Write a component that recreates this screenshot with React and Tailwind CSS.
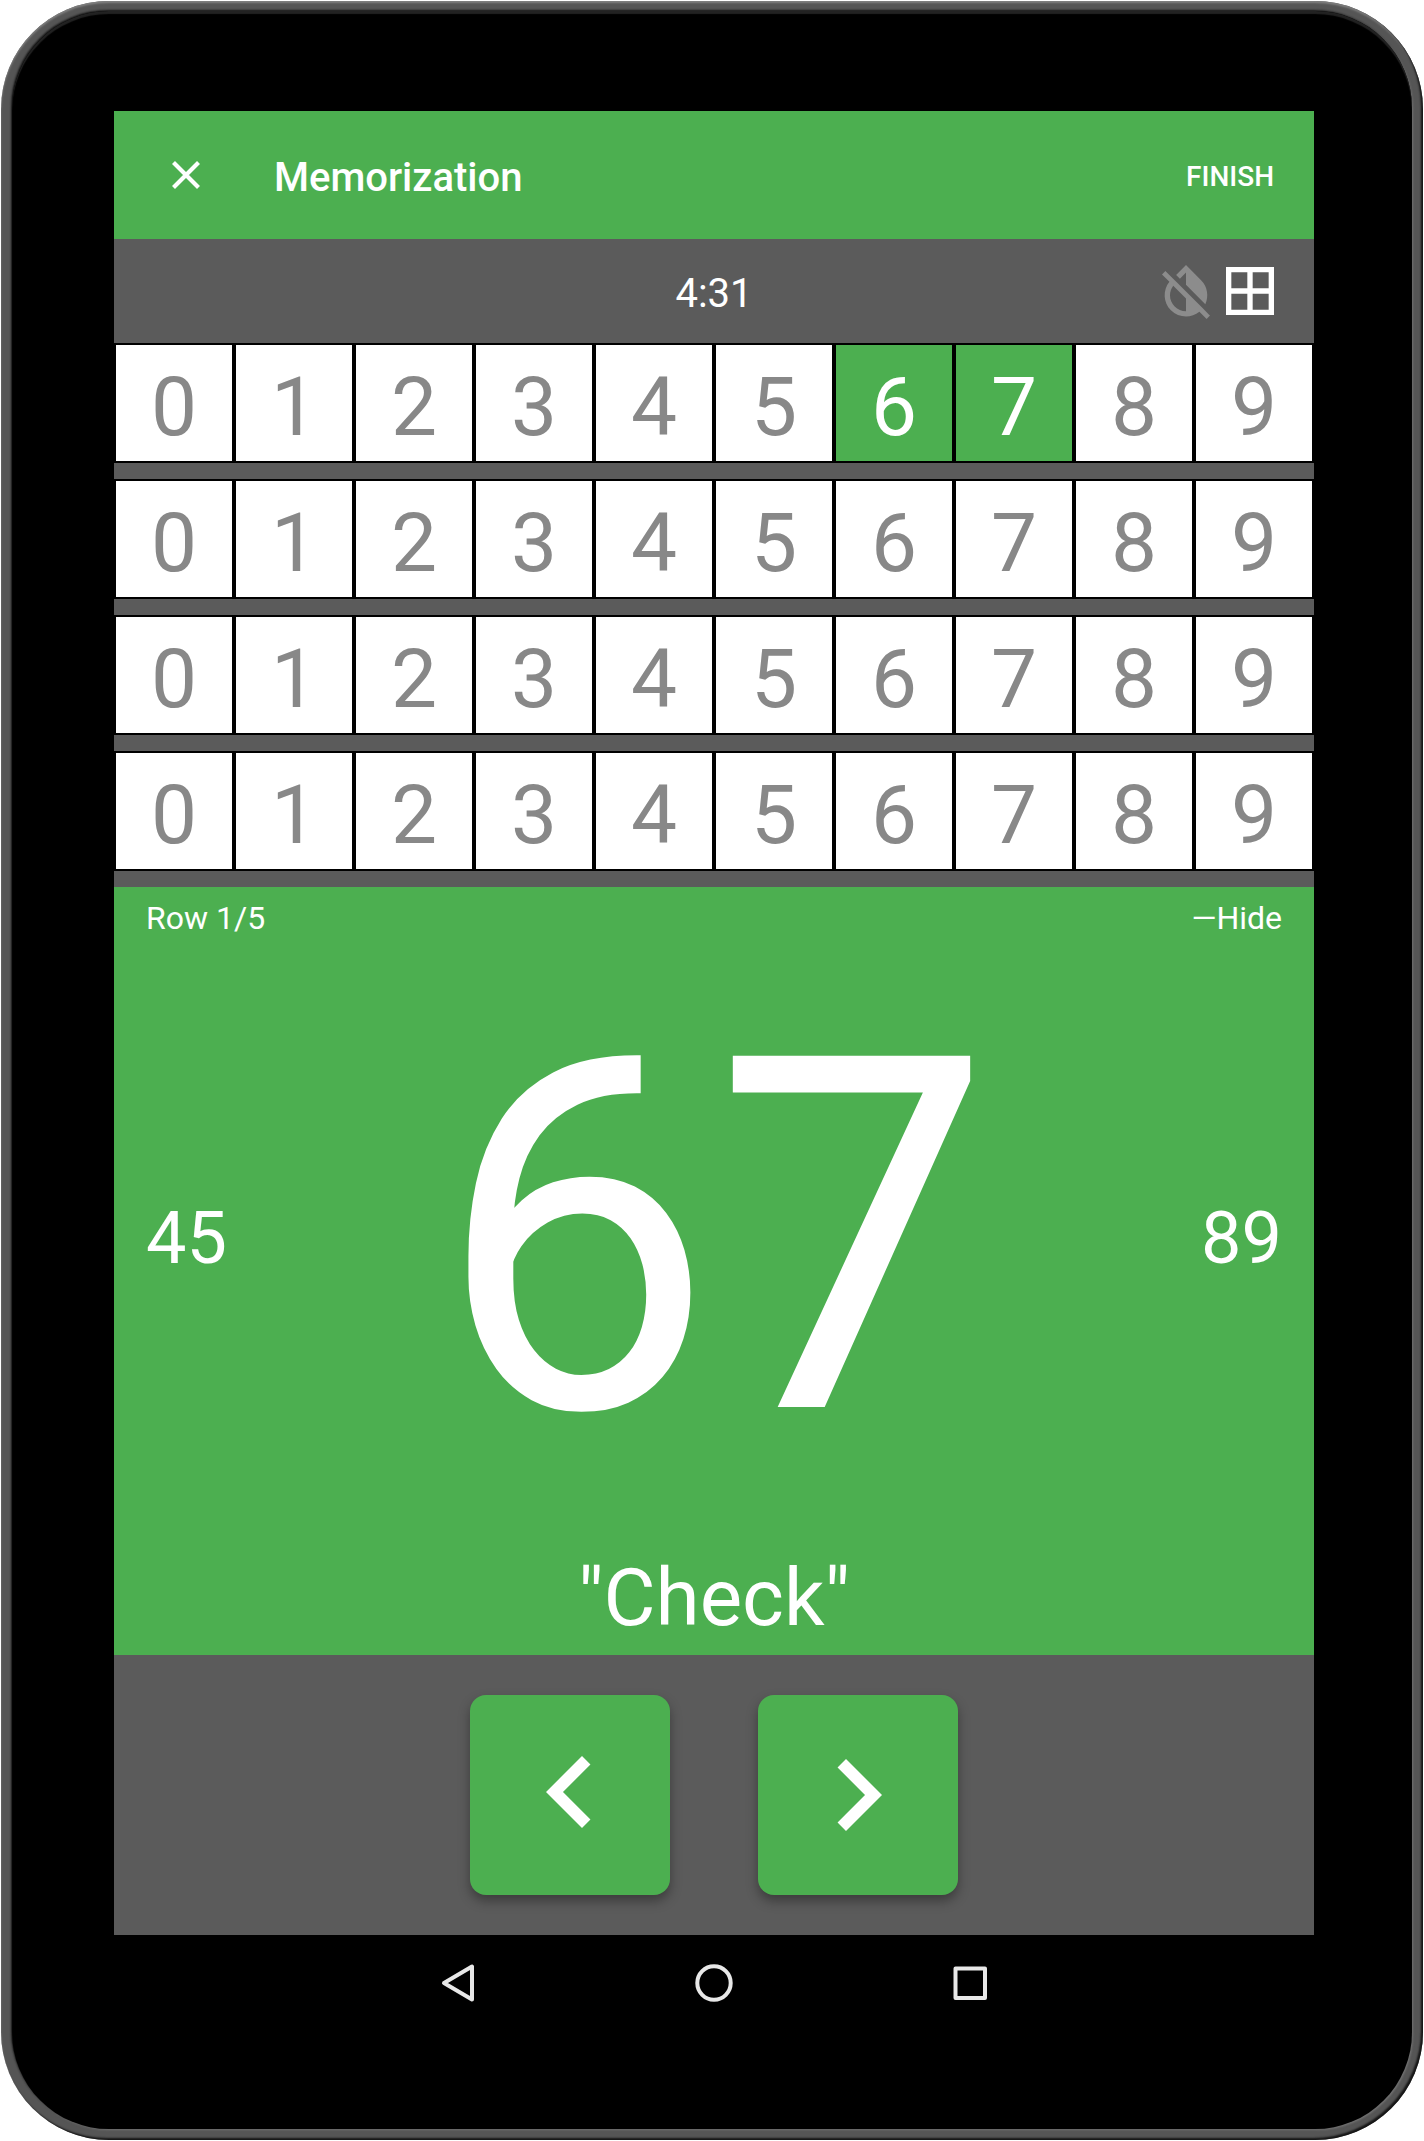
const DIGITS = [0, 1, 2, 3, 4, 5, 6, 7, 8, 9];

function DigitRow({ active = [] }) {
  return (
    <div className="grid h-[120px] grid-cols-10 bg-black">
      {DIGITS.map((d) => (
        <div
          key={d}
          className={
            active.includes(d)
              ? "flex items-center justify-center border-2 border-black bg-[#4caf50] text-[82px] leading-none text-white"
              : "flex items-center justify-center border-2 border-black bg-white text-[82px] leading-none text-[#888888]"
          }
        >
          <span className="pt-2">{d}</span>
        </div>
      ))}
    </div>
  );
}

function Header() {
  return (
    <header className="flex h-32 items-center bg-[#4caf50] pl-[56px] pr-[40px] text-white">
      <svg className="size-8" viewBox="0 0 32 32" fill="none" stroke="currentColor" strokeWidth="4.2">
        <path d="M3.500 3.500 28.500 28.500M28.500 3.500 3.500 28.500" />
      </svg>
      <h1 className="ml-[72px] pt-[6px] text-[40px] font-medium leading-none">Memorization</h1>
      <button className="ml-auto pt-[3px] text-[28px] font-medium leading-none">FINISH</button>
    </header>
  );
}

function StatusBar() {
  return (
    <div className="grid h-[104px] grid-cols-3 items-center bg-[#5b5b5b] px-8 text-white">
      <span />
      <span className="pt-[5px] text-center text-[40px] leading-none">4:31</span>
      <div className="flex items-center justify-end">
        <svg className="size-16 text-[#8c8c8c]" viewBox="0 0 24 24" fill="currentColor">
          <path d="M20.65 20.87 18.3 18.5 12 12.23 8.44 8.66 7 7.25 4.27 4.5 3 5.77 5.78 8.55c-2.55 3.14-2.36 7.76.56 10.69C7.9 20.8 9.95 21.58 12 21.58c1.79 0 3.57-.59 5.03-1.78l2.7 2.7L21 21.23l-.35-.36zM12 19.59c-1.6 0-3.11-.62-4.24-1.76C6.62 16.69 6 15.19 6 13.59c0-1.32.43-2.57 1.21-3.6L12 14.77v4.82zM12 5.1v4.58l7.25 7.26c1.37-2.96.84-6.57-1.6-9L12 2.29l-3.7 3.7 1.41 1.41L12 5.1z" />
        </svg>
        <svg className="size-16" viewBox="0 0 24 24" fill="currentColor">
          <path d="M3 3v18h18V3H3zm8 16H5v-6h6v6zm0-8H5V5h6v6zm8 8h-6v-6h6v6zm0-8h-6V5h6v6z" />
        </svg>
      </div>
    </div>
  );
}

function CardPanel() {
  return (
    <main className="flex h-[768px] flex-col bg-[#4caf50] px-8 text-white">
      <div className="flex h-[62px] items-center justify-between text-[32px] leading-none">
        <span>Row 1/5</span>
        <span>—Hide</span>
      </div>
      <div className="flex h-[580px] items-center justify-between text-[72px] leading-none">
        <span className="w-[90px]">45</span>
        <span className="text-[494px]">67</span>
        <span className="w-[90px] text-right">89</span>
      </div>
      <div className="flex grow items-center justify-center pt-[11px] text-[80px] leading-none">"Check"</div>
    </main>
  );
}

const BUTTON = "flex size-[200px] items-center justify-center rounded-2xl bg-[#4caf50] text-white shadow-[0_6px_12px_rgba(0,0,0,0.35)]";

export default function App() {
  return (
    <div className="h-[2141px] w-[1424px] bg-white p-px font-[Roboto,sans-serif]">
      <div className="h-[2139px] w-[1422px] rounded-[108px] bg-[#555555] px-[11px] pt-[10px] shadow-[inset_-2px_-2px_2px_#151515,inset_0_2px_2px_#808080]">
        <div className="flex h-[2118px] flex-col items-center rounded-[97px] bg-black pt-[100px] pl-[4px] shadow-[-1px_-1px_2px_#151515,1px_1px_2px_#777777,inset_0_3px_1px_#222222]">
          <div className="w-[1200px]">
            <Header />
            <StatusBar />
            <div className="flex flex-col gap-4 bg-[#5b5b5b] pb-4">
              <DigitRow active={[6, 7]} />
              <DigitRow />
              <DigitRow />
              <DigitRow />
            </div>
            <CardPanel />
            <div className="flex h-[280px] items-center justify-center gap-[88px] bg-[#5b5b5b]">
              <button className={BUTTON}>
                <svg className="mb-[6px] size-36" viewBox="0 0 24 24" fill="currentColor">
                  <path d="M15.41 7.41 14 6l-6 6 6 6 1.41-1.41L10.83 12z" />
                </svg>
              </button>
              <button className={BUTTON}>
                <svg className="size-36" viewBox="0 0 24 24" fill="currentColor">
                  <path d="M10 6 8.59 7.41 13.17 12l-4.58 4.59L10 18l6-6z" />
                </svg>
              </button>
            </div>
          </div>
          <nav className="flex h-[96px] w-[550px] items-center justify-between text-[#e8e8e8]">
            <svg className="size-10" viewBox="0 0 40 40" fill="none" stroke="currentColor" strokeWidth="4" strokeLinejoin="round">
              <path d="M5 20 33 3.500V36.500Z" />
            </svg>
            <svg className="size-10" viewBox="0 0 40 40" fill="none" stroke="currentColor" strokeWidth="4">
              <circle cx="20" cy="20" r="16.700" />
            </svg>
            <svg className="size-10" viewBox="0 0 40 40" fill="none" stroke="currentColor" strokeWidth="4" strokeLinejoin="round">
              <rect x="6.500" y="5.500" width="29.500" height="29.500" />
            </svg>
          </nav>
        </div>
      </div>
    </div>
  );
}
